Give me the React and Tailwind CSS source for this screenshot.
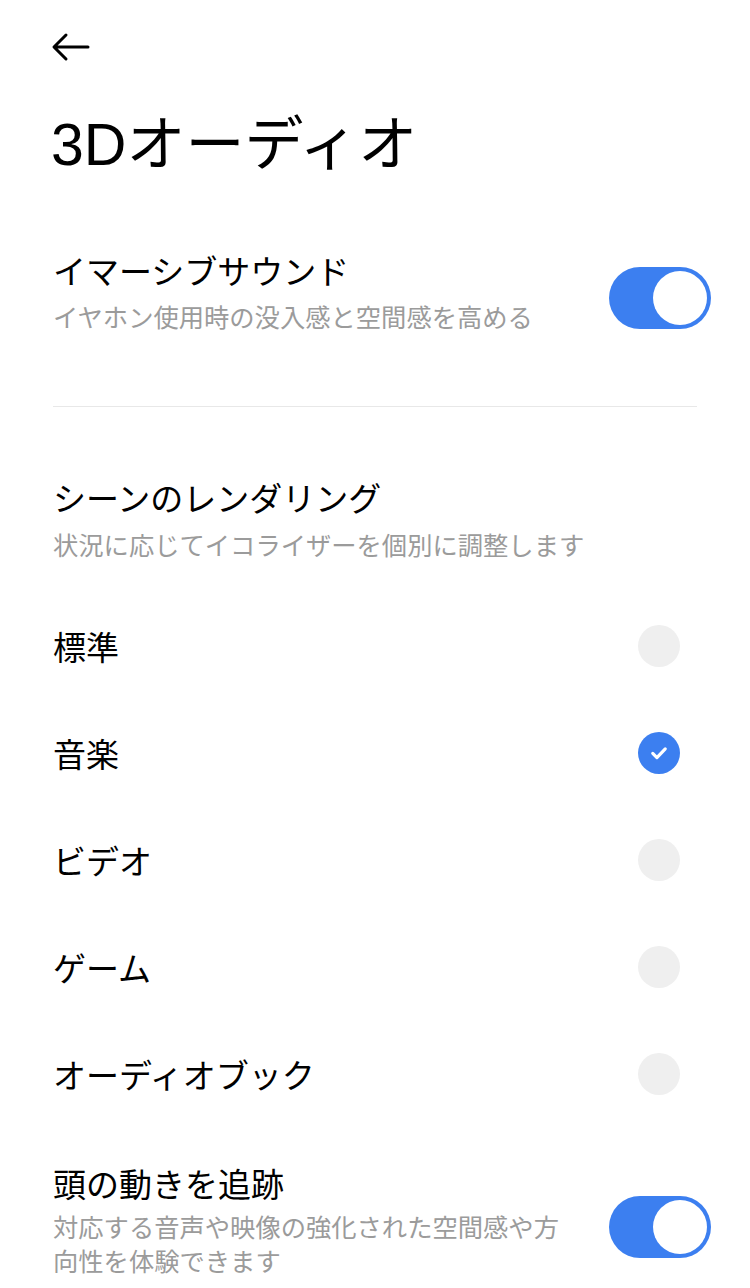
import React, { useState } from 'react';

const options = ['標準', '音楽', 'ビデオ', 'ゲーム', 'オーディオブック'];

function Toggle({ on, onChange, className = '' }) {
  return (
    <button
      type="button"
      onClick={() => onChange(!on)}
      className={`relative h-[62px] w-[102px] shrink-0 rounded-full ${
        on ? 'bg-[#3c7ff0]' : 'bg-[#e2e2e2]'
      } ${className}`}
    >
      <span
        className={`absolute top-[4px] h-[54px] w-[54px] rounded-full bg-white ${
          on ? 'right-[4px]' : 'left-[4px]'
        }`}
      />
    </button>
  );
}

function Radio({ checked }) {
  return (
    <span
      className={`flex h-[42px] w-[42px] items-center justify-center rounded-full ${
        checked ? 'bg-[#3c7ff0]' : 'bg-[#efefef]'
      }`}
    >
      {checked && (
        <svg width="20" height="20" viewBox="0 0 24 24" fill="none">
          <path
            d="M4.5 12.5l5 5L19.5 7"
            stroke="white"
            strokeWidth="3.8"
            strokeLinecap="round"
            strokeLinejoin="round"
          />
        </svg>
      )}
    </span>
  );
}

export default function App() {
  const [immersive, setImmersive] = useState(true);
  const [tracking, setTracking] = useState(true);
  const [scene, setScene] = useState('音楽');

  return (
    <div
      className="min-h-[1288px] w-[750px] overflow-hidden bg-white px-[53px] text-black"
      style={{ fontFamily: '"Noto Sans CJK JP", "Noto Sans", sans-serif' }}
    >
      <div className="flex h-[94px] items-center">
        <svg width="40" height="30" viewBox="0 0 40 30" fill="none" className="-ml-[2px]">
          <path
            d="M37 15H4M15 3L3 15l12 12"
            stroke="black"
            strokeWidth="3"
            strokeLinecap="round"
            strokeLinejoin="round"
          />
        </svg>
      </div>

      <div className="flex h-[102px] items-center">
        <h1 className="-ml-[2px] font-['Liberation_Sans','Noto_Sans_CJK_JP',sans-serif] text-[59px] font-normal leading-none">
          3Dオーディオ
        </h1>
      </div>

      <div className="flex items-start justify-between pt-[52px]">
        <div>
          <div className="text-[33px] leading-[44px]">イマーシブサウンド</div>
          <div className="mt-[6px] text-[25.3px] leading-[36px] text-[#9b9b9b]">
            イヤホン使用時の没入感と空間感を高める
          </div>
        </div>
        <Toggle on={immersive} onChange={setImmersive} className="-mr-[14px] mt-[19px]" />
      </div>

      <div className="mt-[72px] h-px bg-[#e8e8e8]" />

      <div className="mt-[68px] text-[33px] leading-[44px]">シーンのレンダリング</div>
      <div className="mt-[7px] text-[25.3px] leading-[36px] text-[#9b9b9b]">
        状況に応じてイコライザーを個別に調整します
      </div>

      <div className="mt-[30px]">
        {options.map((o) => (
          <button
            key={o}
            type="button"
            onClick={() => setScene(o)}
            className="flex h-[107px] w-full items-center justify-between text-left"
          >
            <span className="text-[33px] leading-[44px]">{o}</span>
            <span className="mr-[17px]">
              <Radio checked={scene === o} />
            </span>
          </button>
        ))}
      </div>

      <div className="mt-[34px] flex items-start justify-between">
        <div className="w-[515px]">
          <div className="text-[33px] leading-[44px]">頭の動きを追跡</div>
          <div className="mt-[4px] text-[25.3px] leading-[34px] text-[#9b9b9b]">
            対応する音声や映像の強化された空間感や方向性を体験できます
          </div>
        </div>
        <Toggle on={tracking} onChange={setTracking} className="-mr-[14px] mt-[35px]" />
      </div>
    </div>
  );
}
